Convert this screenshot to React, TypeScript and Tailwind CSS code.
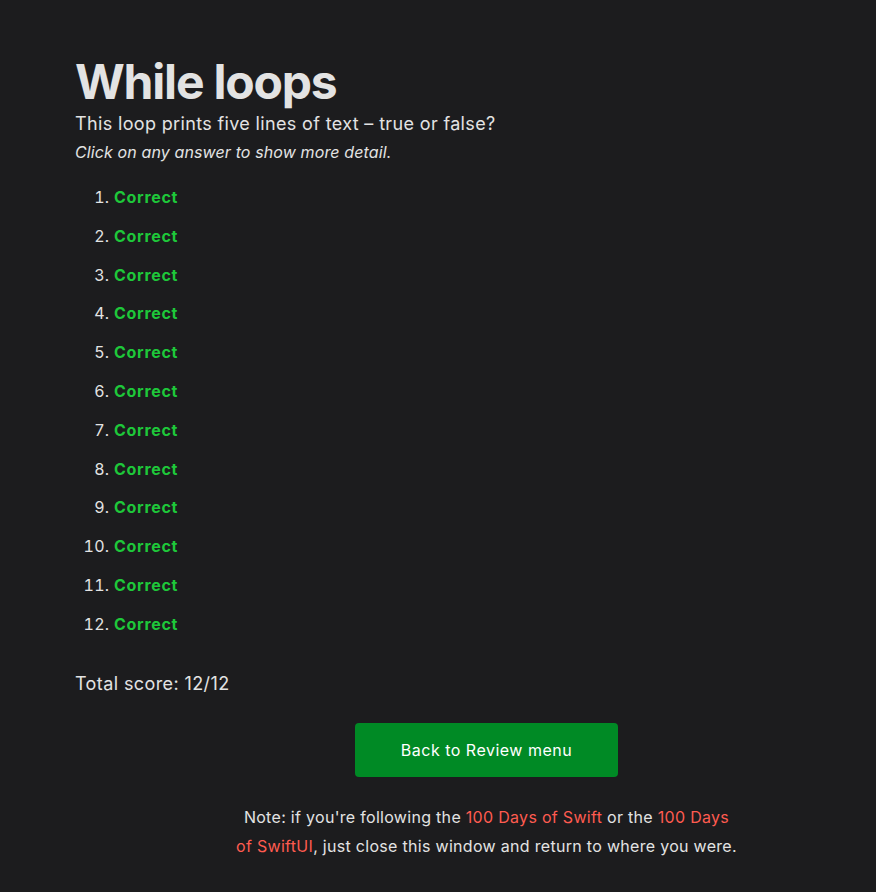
export default function App() {
  const items = Array.from({ length: 12 }, (_, i) => i + 1);

  return (
    <div className="min-h-screen bg-[#1c1c1e] text-[#e3e3e3] font-['Inter','Noto_Sans',sans-serif] tracking-[0.3px]">
      <div className="px-[75px] pt-[58px] pb-[30px]">
        <h1 className="text-[48px] leading-[48px] font-bold tracking-[-1.2px]">While loops</h1>
        <p className="mt-[6px] text-[18px] leading-[24px] tracking-[0.35px]">This loop prints five lines of text – true or false?</p>
        <p className="mt-[4px] text-[16px] leading-[24px] italic tracking-[0.12px]">Click on any answer to show more detail.</p>

        <ol className="mt-[21px] list-decimal pl-[39px] space-y-[14.8px] text-[16px] leading-[24px]">
          {items.map((n) => (
            <li key={n}>
              <span className="font-bold text-[#1ec83a] tracking-[0.7px] cursor-pointer">Correct</span>
            </li>
          ))}
        </ol>

        <p className="mt-[36px] text-[18px] leading-[24px] tracking-[0.4px]">Total score: 12/12</p>

        <div className="pl-[97px]">
          <div className="mt-[27px] flex justify-center">
            <button className="w-[263px] h-[54px] rounded-[4px] bg-[#008a25] text-white text-[16px] tracking-[0.5px]">
              Back to Review menu
            </button>
          </div>
          <p className="mx-auto mt-[26px] max-w-[503px] text-center text-[16px] leading-[29px]">
            Note: if you're following the <a className="text-[#ff5b50]">100 Days of Swift</a> or the{" "}
            <a className="text-[#ff5b50]">100 Days of SwiftUI</a>, just close this window and return to where you were.
          </p>
        </div>
      </div>
    </div>
  );
}
